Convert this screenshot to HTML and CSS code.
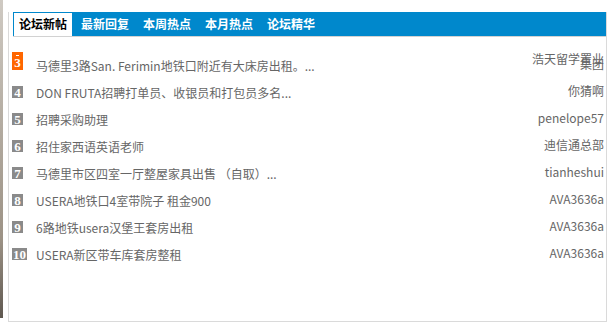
FILE: index.html
```html
<!DOCTYPE html>
<html lang="zh-CN">
<head>
    <meta charset="UTF-8">
    <title>论坛新帖</title>
    <link rel="stylesheet" href="styles.css">
</head>
<body>
    <div class="strip"></div>

    <div class="box">
        <ul class="tabs">
            <li class="active">论坛新帖</li>
            <li>最新回复</li>
            <li>本周热点</li>
            <li>本月热点</li>
            <li>论坛精华</li>
        </ul>

        <ul class="list">
            <li class="row">
                <span class="num-cell"><span class="num hot">3</span></span>
                <a class="title" href="#">马德里3路San. Ferimin地铁口附近有大床房出租。...</a>
                <span class="author wrap">浩天留学置业<br>集团</span>
            </li>
            <li class="row">
                <span class="num-cell"><span class="num">4</span></span>
                <a class="title" href="#">DON FRUTA招聘打单员、收银员和打包员多名...</a>
                <span class="author">你猜啊</span>
            </li>
            <li class="row">
                <span class="num-cell"><span class="num">5</span></span>
                <a class="title" href="#">招聘采购助理</a>
                <span class="author">penelope57</span>
            </li>
            <li class="row">
                <span class="num-cell"><span class="num">6</span></span>
                <a class="title" href="#">招住家西语英语老师</a>
                <span class="author">迪信通总部</span>
            </li>
            <li class="row">
                <span class="num-cell"><span class="num">7</span></span>
                <a class="title" href="#">马德里市区四室一厅整屋家具出售 （自取）...</a>
                <span class="author">tianheshui</span>
            </li>
            <li class="row">
                <span class="num-cell"><span class="num">8</span></span>
                <a class="title" href="#">USERA地铁口4室带院子 租金900</a>
                <span class="author">AVA3636a</span>
            </li>
            <li class="row">
                <span class="num-cell"><span class="num">9</span></span>
                <a class="title" href="#">6路地铁usera汉堡王套房出租</a>
                <span class="author">AVA3636a</span>
            </li>
            <li class="row">
                <span class="num-cell"><span class="num">10</span></span>
                <a class="title" href="#">USERA新区带车库套房整租</a>
                <span class="author">AVA3636a</span>
            </li>
        </ul>
    </div>
</body>
</html>
```

FILE: styles.css
```css
body {
    margin: 0;
    display: flex;
    font-family: "Noto Sans CJK SC", "Noto Sans", sans-serif;
    font-size: 12px;
    color: #666;
}
ul {
    list-style: none;
    margin: 0;
    padding: 0;
}
.strip {
    width: 3px;
    height: 318px;
    flex: none;
    background: linear-gradient(#cfcac3, #b3aba0 40%, #9c9285 75%, #5f5850);
}
.box {
    margin: 12px 0 0 5px;
    width: 597px;
    height: 309px;
    border: 1px solid #dadada;
    border-top: none;
}
.tabs {
    display: flex;
    gap: 4px;
    height: 24px;
    margin-left: 4px;
    padding-left: 1px;
    background-color: #0088cc;
    border-bottom: 1px solid #d2d2d2;
}
.tabs li {
    padding: 0 5px;
    line-height: 24px;
    font-weight: bold;
    color: #fff;
}
.tabs .active {
    margin-top: 1px;
    line-height: 22px;
    background-color: #fff;
    color: #000;
}
.list {
    padding: 15px 2px 0 3px;
}
.row {
    display: flex;
    align-items: center;
    height: 27px;
}
.num-cell {
    width: 24px;
    flex: none;
}
.num {
    display: inline-block;
    min-width: 11px;
    padding: 0 1px;
    box-sizing: border-box;
    margin-bottom: 4px;
    height: 12px;
    line-height: 13px;
    background-color: #8a8a8a;
    color: #fff;
    font-family: "Liberation Serif", serif;
    font-weight: bold;
    font-size: 13px;
    text-align: center;
    vertical-align: middle;
}
.num.hot {
    position: relative;
    height: 18px;
    line-height: 22px;
    margin-bottom: 10px;
    background-color: #ff6600;
}
.num.hot::before {
    content: "";
    position: absolute;
    left: 4px;
    top: 3px;
    width: 3px;
    height: 1px;
    background-color: #fff;
}
.title {
    flex: 1;
    color: #666;
    text-decoration: none;
    white-space: nowrap;
}
.author {
    margin-bottom: 5px;
    color: #666;
    text-align: right;
    white-space: nowrap;
}
.author.wrap {
    line-height: 5.5px;
    margin-bottom: 9px;
}
```
